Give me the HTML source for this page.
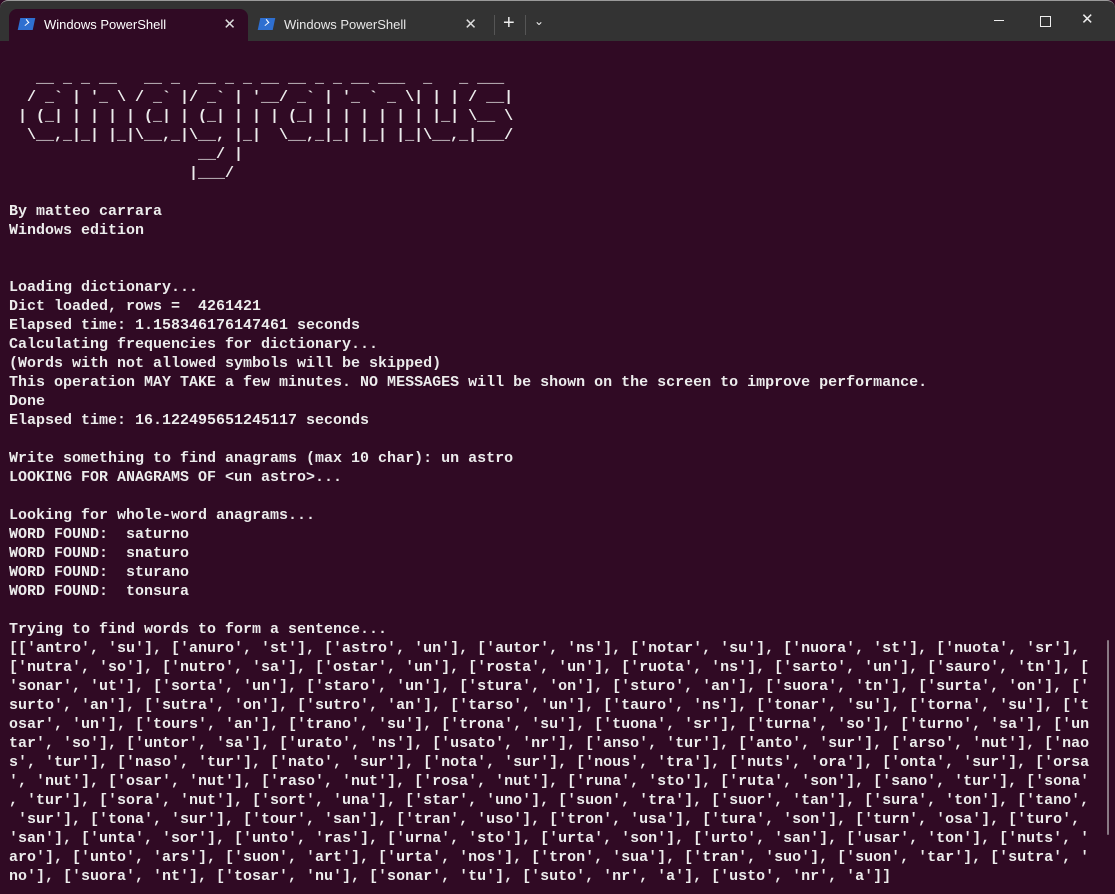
<!DOCTYPE html>
<html><head><meta charset="utf-8"><style>
html,body{margin:0;padding:0;width:1115px;height:894px;overflow:hidden;background:#300a24;}
.win{position:absolute;left:0;top:0;width:1115px;height:894px;background:#300a24;}
.bar{position:absolute;left:0;top:0;width:1115px;height:41px;background:#333333;border-top:1px solid #9a9a9a;box-sizing:border-box;border-radius:8px 8px 0 0;}
.tab{position:absolute;top:9px;height:32px;font:13px "Liberation Sans",sans-serif;color:#fff;}
.t1{left:9px;width:239px;background:#300a24;border-radius:8px 8px 0 0;}
.t2{left:249px;width:240px;color:#e8e8e8;}
.tab .ico{position:absolute;left:10px;top:9px;width:15px;height:12px;background:#2e6fd0;transform:skewX(-12deg);}
.tab .ico:after{content:"";position:absolute;left:4px;top:2px;width:4px;height:4px;border-right:1.5px solid #fff;border-bottom:1.5px solid #fff;transform:rotate(-45deg);}
.tab .lbl{position:absolute;left:35px;top:8px;}
.tab .x{position:absolute;right:12px;top:6px;font-size:15px;color:#ddd;}
.ctl{position:absolute;color:#eee;font:18px "Liberation Sans",sans-serif;}
pre{position:absolute;left:9px;top:49.5px;margin:0;font:bold 15px/19px "Liberation Mono",monospace;color:#ececec;white-space:pre;}
.sb{position:absolute;left:1107px;top:640px;width:2px;height:195px;background:#8a7a85;border-radius:1px;}
</style></head><body><div class="win">
<div class="bar"></div>
<div class="tab t1"><div class="ico"></div><span class="lbl">Windows PowerShell</span><span class="x">✕</span></div>
<div class="tab t2"><div class="ico"></div><span class="lbl">Windows PowerShell</span><span class="x">✕</span></div>
<div style="position:absolute;left:494px;top:15px;width:1px;height:20px;background:#555"></div>
<div class="ctl" style="left:503px;top:12px;font-size:20px">+</div>
<div style="position:absolute;left:525px;top:15px;width:1px;height:20px;background:#555"></div>
<div class="ctl" style="left:534px;top:14px;font-size:12px">&#8964;</div>
<div style="position:absolute;left:994px;top:20px;width:10px;height:1px;background:#eee"></div>
<div style="position:absolute;left:1040px;top:16px;width:9px;height:9px;border:1px solid #eee"></div>
<div class="ctl" style="left:1081px;top:10px;font-size:15px">✕</div>
<pre>

   __ _ _ __   __ _  __ _ _ __ __ _ _ __ ___  _   _ ___
  / _` | '_ \ / _` |/ _` | '__/ _` | '_ ` _ \| | | / __|
 | (_| | | | | (_| | (_| | | | (_| | | | | | | |_| \__ \
  \__,_|_| |_|\__,_|\__, |_|  \__,_|_| |_| |_|\__,_|___/
                     __/ |
                    |___/

By matteo carrara
Windows edition


Loading dictionary...
Dict loaded, rows =  4261421
Elapsed time: 1.158346176147461 seconds
Calculating frequencies for dictionary...
(Words with not allowed symbols will be skipped)
This operation MAY TAKE a few minutes. NO MESSAGES will be shown on the screen to improve performance.
Done
Elapsed time: 16.122495651245117 seconds

Write something to find anagrams (max 10 char): un astro
LOOKING FOR ANAGRAMS OF &lt;un astro&gt;...

Looking for whole-word anagrams...
WORD FOUND:  saturno
WORD FOUND:  snaturo
WORD FOUND:  sturano
WORD FOUND:  tonsura

Trying to find words to form a sentence...
[['antro', 'su'], ['anuro', 'st'], ['astro', 'un'], ['autor', 'ns'], ['notar', 'su'], ['nuora', 'st'], ['nuota', 'sr'],
['nutra', 'so'], ['nutro', 'sa'], ['ostar', 'un'], ['rosta', 'un'], ['ruota', 'ns'], ['sarto', 'un'], ['sauro', 'tn'], [
'sonar', 'ut'], ['sorta', 'un'], ['staro', 'un'], ['stura', 'on'], ['sturo', 'an'], ['suora', 'tn'], ['surta', 'on'], ['
surto', 'an'], ['sutra', 'on'], ['sutro', 'an'], ['tarso', 'un'], ['tauro', 'ns'], ['tonar', 'su'], ['torna', 'su'], ['t
osar', 'un'], ['tours', 'an'], ['trano', 'su'], ['trona', 'su'], ['tuona', 'sr'], ['turna', 'so'], ['turno', 'sa'], ['un
tar', 'so'], ['untor', 'sa'], ['urato', 'ns'], ['usato', 'nr'], ['anso', 'tur'], ['anto', 'sur'], ['arso', 'nut'], ['nao
s', 'tur'], ['naso', 'tur'], ['nato', 'sur'], ['nota', 'sur'], ['nous', 'tra'], ['nuts', 'ora'], ['onta', 'sur'], ['orsa
', 'nut'], ['osar', 'nut'], ['raso', 'nut'], ['rosa', 'nut'], ['runa', 'sto'], ['ruta', 'son'], ['sano', 'tur'], ['sona'
, 'tur'], ['sora', 'nut'], ['sort', 'una'], ['star', 'uno'], ['suon', 'tra'], ['suor', 'tan'], ['sura', 'ton'], ['tano',
 'sur'], ['tona', 'sur'], ['tour', 'san'], ['tran', 'uso'], ['tron', 'usa'], ['tura', 'son'], ['turn', 'osa'], ['turo',
'san'], ['unta', 'sor'], ['unto', 'ras'], ['urna', 'sto'], ['urta', 'son'], ['urto', 'san'], ['usar', 'ton'], ['nuts', '
aro'], ['unto', 'ars'], ['suon', 'art'], ['urta', 'nos'], ['tron', 'sua'], ['tran', 'suo'], ['suon', 'tar'], ['sutra', '
no'], ['suora', 'nt'], ['tosar', 'nu'], ['sonar', 'tu'], ['suto', 'nr', 'a'], ['usto', 'nr', 'a']]</pre>
<div class="sb"></div>
</div></body></html>
